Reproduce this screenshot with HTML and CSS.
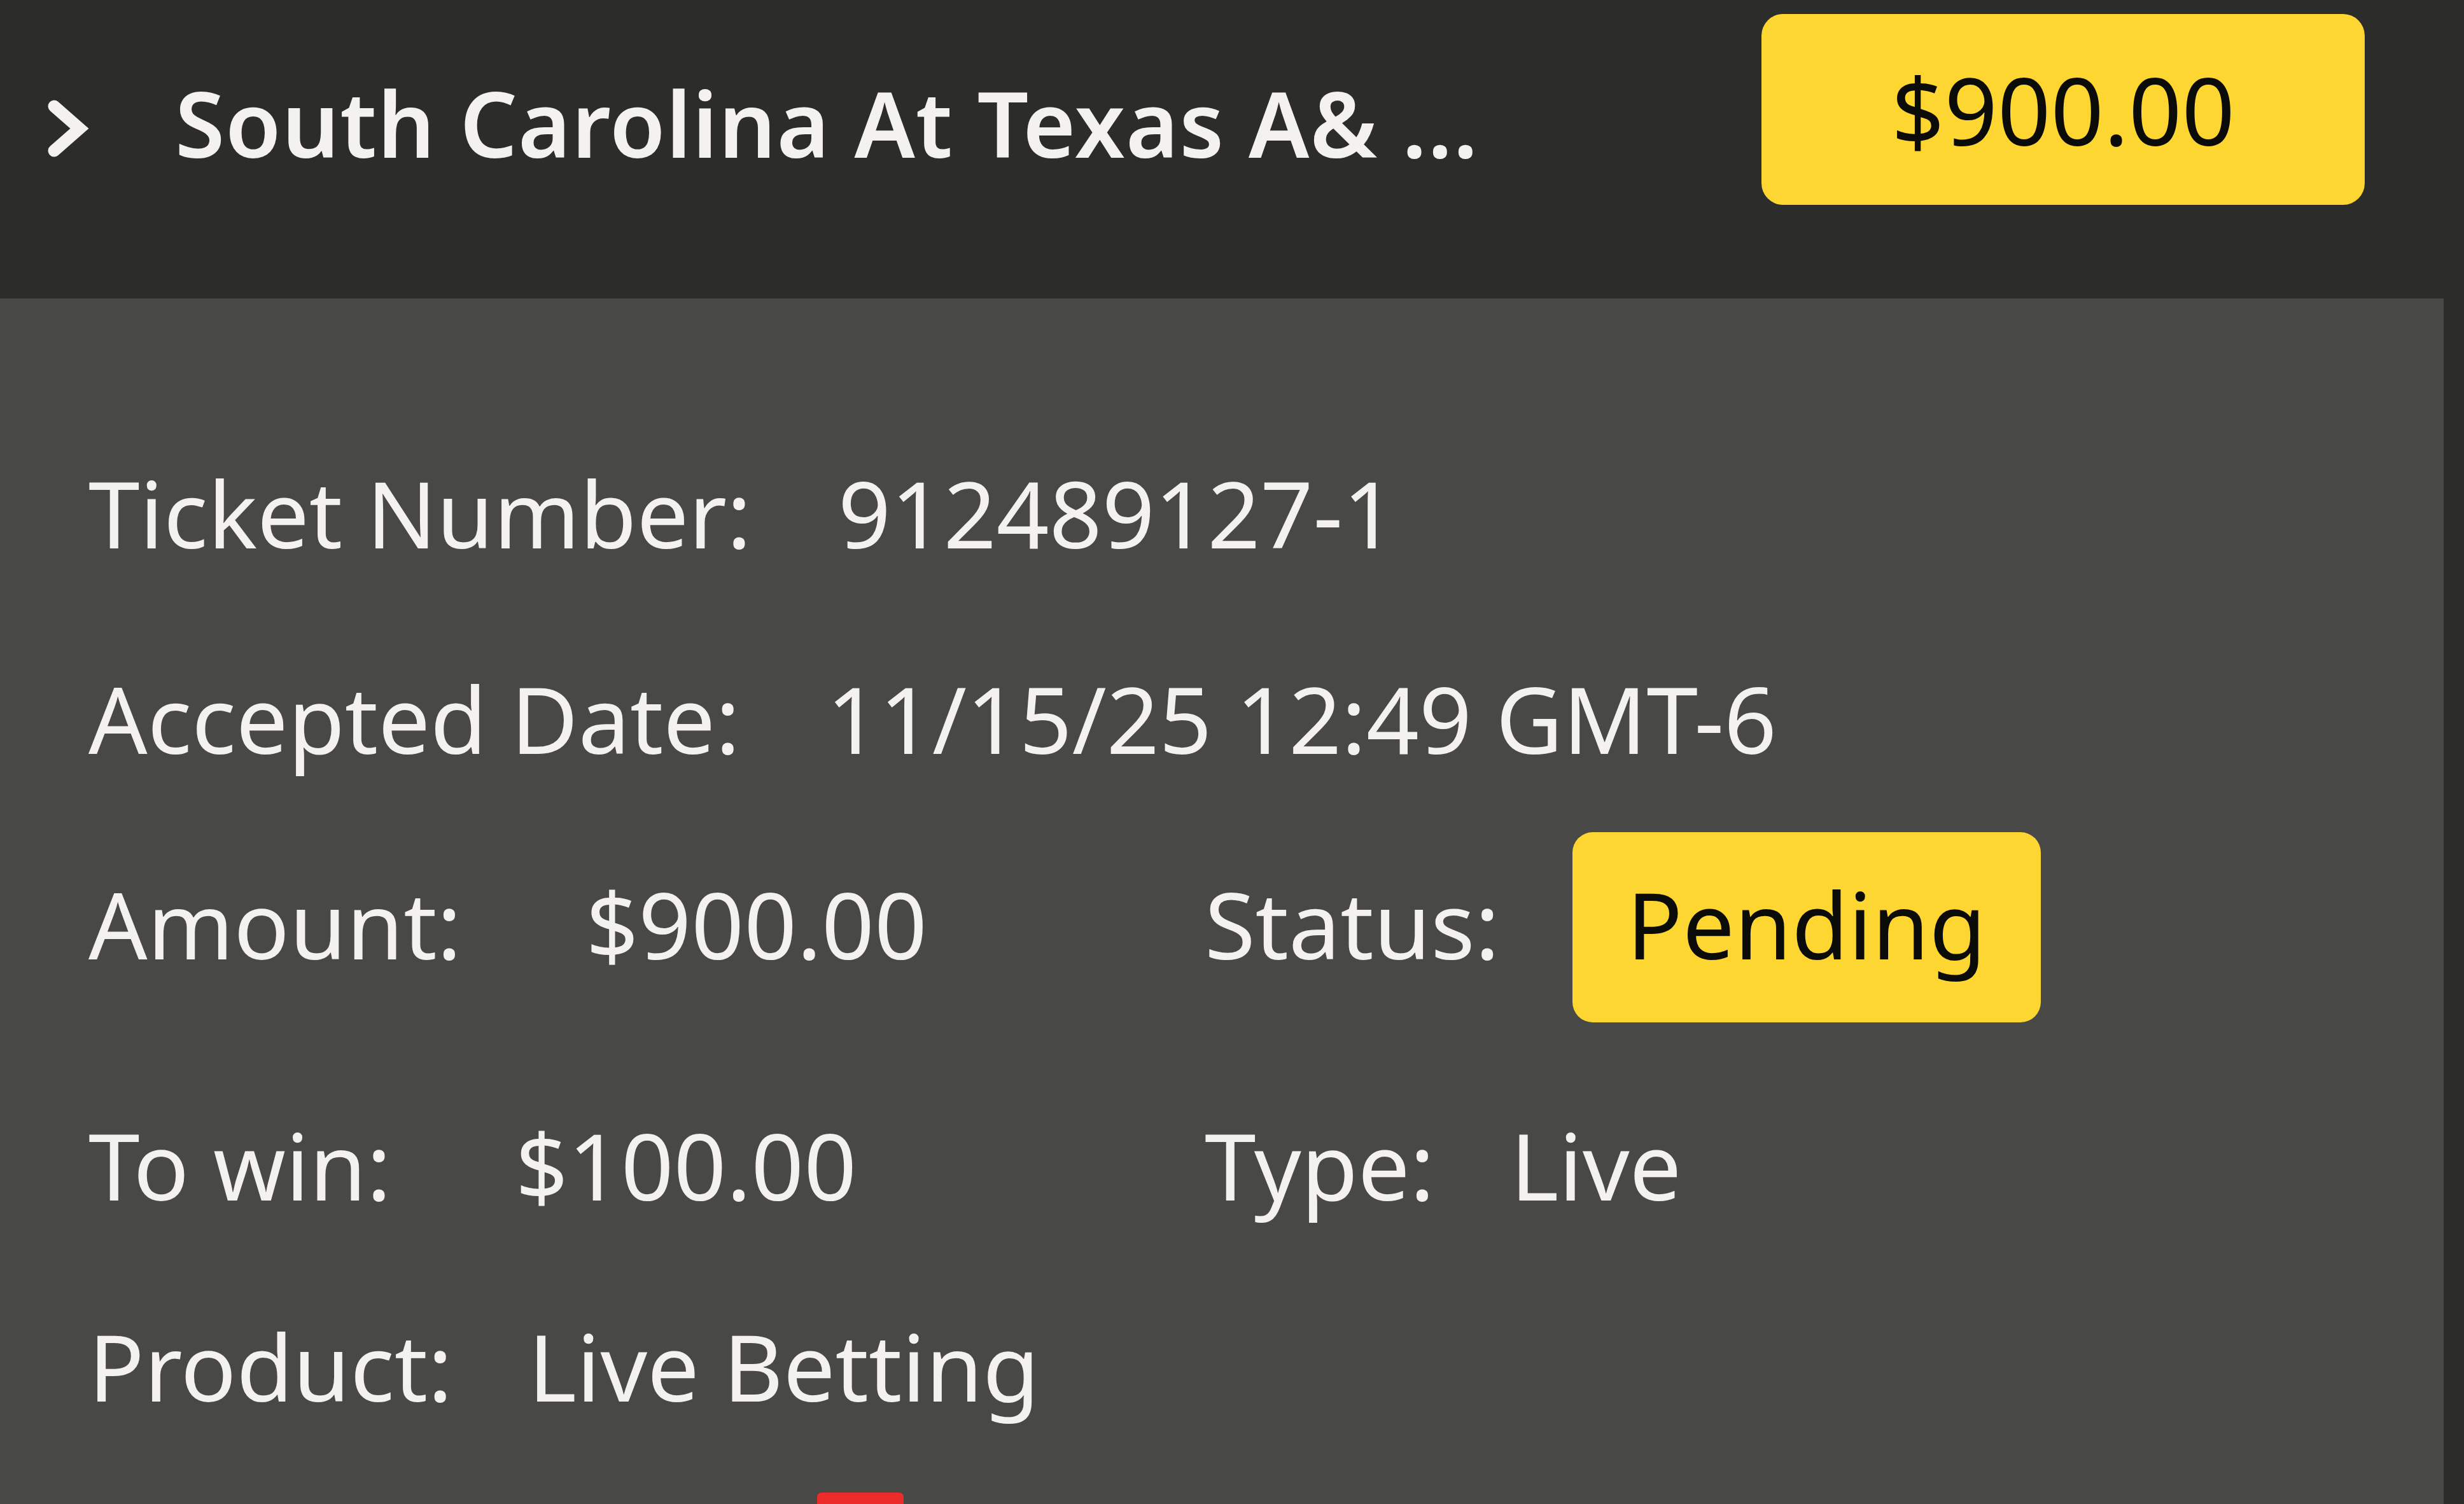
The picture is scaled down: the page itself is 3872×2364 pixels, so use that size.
FILE: index.html
```html
<!DOCTYPE html>
<html lang="en">
<head>
<meta charset="utf-8">
<title>Ticket</title>
<link rel="stylesheet" href="styles.css">
</head>
<body>
<header class="header">
  <svg class="chev" viewBox="0 0 70 90" aria-hidden="true">
    <polyline points="10,10 50,45 10,80" fill="none" stroke="#f4f1f1" stroke-width="19" stroke-linecap="round" stroke-linejoin="miter"/>
  </svg>
  <div class="title">South Carolina At Texas A&amp; ...</div>
  <div class="amount-btn">$900.00</div>
</header>
<section class="panel">
  <div class="row">
    <span class="label">Ticket Number:</span><span class="val val--m">912489127-1</span>
  </div>
  <div class="row">
    <span class="label">Accepted Date:</span><span class="val val--m">11/15/25 12:49 GMT-6</span>
  </div>
  <div class="row row--badge">
    <div class="field field--wide"><span class="label">Amount:</span><span class="val val--l">$900.00</span></div>
    <div class="field"><span class="label">Status:</span><span class="badge">Pending</span></div>
  </div>
  <div class="row">
    <div class="field field--wide"><span class="label">To win:</span><span class="val val--l">$100.00</span></div>
    <div class="field"><span class="label">Type:</span><span class="val val--s">Live</span></div>
  </div>
  <div class="row row--last">
    <span class="label">Product:</span><span class="val val--s">Live Betting</span>
  </div>
  <div class="action"></div>
</section>
</body>
</html>
```
FILE: styles.css
```css
html, body {
  margin: 0;
  padding: 0;
}
body {
  width: 3872px;
  height: 2364px;
  overflow: hidden;
  background: #2c2c2b;
  font-family: "Noto Sans", "Open Sans", sans-serif;
  color: #f4f1f1;
}
.header {
  display: flex;
  align-items: flex-start;
  height: 469px;
  box-sizing: border-box;
  padding: 22px 156px 0 75px;
  background: #2c2c2b;
}
.chev {
  width: 70px;
  height: 90px;
  margin-top: 135px;
  flex: none;
}
.title {
  margin-left: 130px;
  margin-top: 74px;
  font-size: 142px;
  font-weight: 600;
  letter-spacing: 1px;
  line-height: 194px;
  white-space: nowrap;
  color: #f4f1f1;
}
.amount-btn {
  margin-left: auto;
  width: 948px;
  height: 300px;
  border-radius: 34px;
  background: #fdd631;
  color: #0b0b0a;
  font-size: 146px;
  line-height: 199px;
  display: flex;
  align-items: center;
  justify-content: center;
  flex: none;
}
.panel {
  width: 3840px;
  height: 1895px;
  box-sizing: border-box;
  padding: 238px 0 0 139px;
  background: #484847;
  display: flex;
  flex-direction: column;
  gap: 125px;
}
.row {
  display: flex;
  align-items: baseline;
  font-size: 145px;
  line-height: 198px;
  white-space: nowrap;
}
.row--badge {
  margin-top: -45px;
}
.row--last {
  margin-top: -7px;
}
.field {
  display: flex;
  align-items: baseline;
}
.field--wide {
  width: 1754px;
  flex: none;
}
.label {
  color: #f4f1f1;
}
.val {
  color: #f4f1f1;
}
.val--m {
  margin-left: 136px;
}
.val--l {
  margin-left: 195px;
}
.val--s {
  margin-left: 119px;
}
.badge {
  margin-left: 114px;
  width: 736px;
  box-sizing: border-box;
  padding: 45px 0 56px;
  text-align: center;
  border-radius: 32px;
  background: #fdd631;
  color: #0b0b0a;
}
.action {
  margin-top: -25px;
  margin-left: 1145px;
  width: 136px;
  height: 40px;
  border-radius: 7px 7px 0 0;
  background: #ec2b2b;
}
```
